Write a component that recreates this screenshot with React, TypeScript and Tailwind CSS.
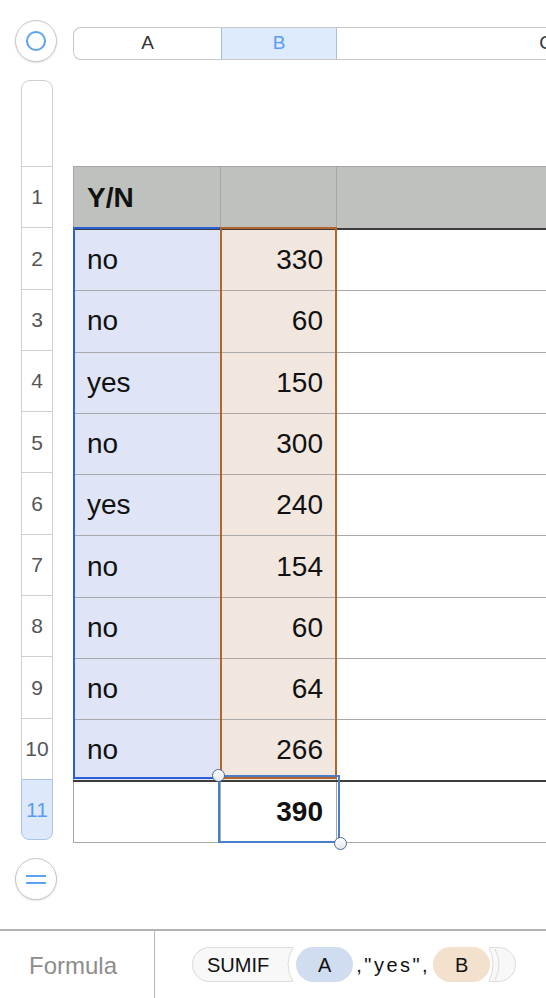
import React from "react";

const ROWS: { a: string; b: string }[] = [
  { a: "no", b: "330" },
  { a: "no", b: "60" },
  { a: "yes", b: "150" },
  { a: "no", b: "300" },
  { a: "yes", b: "240" },
  { a: "no", b: "154" },
  { a: "no", b: "60" },
  { a: "no", b: "64" },
  { a: "no", b: "266" },
];

const font = { fontFamily: '"Liberation Sans", Arial, sans-serif' };

function Handle({ className }: { className: string }) {
  return (
    <div
      className={`absolute h-[13px] w-[13px] rounded-full border-[1.5px] border-[#4f6a9c] bg-gradient-to-b from-white to-[#e4e7ee] ${className}`}
    />
  );
}

export default function App() {
  return (
    <div className="relative h-[998px] w-[546px] overflow-hidden bg-white text-[#111]" style={font}>
      {/* top bar: select-all circle + column headers */}
      <div className="flex h-[80px] items-start pt-[20px]">
        <div className="ml-[15px] flex h-[42px] w-[42px] items-center justify-center rounded-full border border-[#c6c6c6] bg-white shadow-[0_1px_2px_rgba(0,0,0,0.12)]">
          <div className="h-[20px] w-[20px] rounded-full border-2 border-[#5ca2f2]" />
        </div>
        <div className="ml-[16px] mt-[7px] flex h-[33px] flex-1 overflow-hidden rounded-l-[8px] border border-r-0 border-[#c9c9c9] bg-white text-[19px]">
          <div className="flex w-[147px] shrink-0 items-center justify-center text-[#333]">A</div>
          <div className="flex w-[116px] shrink-0 items-center justify-center border-x border-[#a8bfdc] bg-[#deebfc] text-[#5b9cf0]">
            B
          </div>
          <div className="flex w-[418px] shrink-0 items-center justify-center text-[#333]">C</div>
        </div>
      </div>

      {/* body */}
      <div className="flex">
        {/* row headers */}
        <div className="ml-[21px] flex w-[32px] shrink-0 flex-col text-[21px] text-[#555]">
          <div className="h-[86px] rounded-t-[9px] border border-b-0 border-[#cfcfcf]" />
          {Array.from({ length: 10 }).map((_, i) => (
            <div
              key={i}
              className="flex h-[61.3px] items-center justify-center border-x border-t border-[#cfcfcf]"
            >
              {i + 1}
            </div>
          ))}
          <div className="flex h-[61.3px] items-center justify-center rounded-b-[8px] border border-[#a9c4e6] bg-[#dde9fb] text-[#5b9cf0]">
            11
          </div>
          <div className="ml-[-6px] mt-[18px] flex h-[42px] w-[42px] items-center justify-center rounded-full border border-[#c6c6c6] bg-white shadow-[0_1px_2px_rgba(0,0,0,0.12)]">
            <div className="flex flex-col gap-[5px]">
              <div className="h-[2px] w-[20px] bg-[#5ca2f2]" />
              <div className="h-[2px] w-[20px] bg-[#5ca2f2]" />
            </div>
          </div>
        </div>

        {/* table */}
        <div className="ml-[20px] mt-[86px] flex-1">
          <div className="relative w-[560px] text-[28px]">
            {/* header row */}
            <div className="flex h-[62px] border-t border-[#a6a6a6] bg-[#bfc1bf]">
              <div className="flex w-[148px] items-center border-l border-r border-[#a6a6a6] pl-[13px] font-bold">
                Y/N
              </div>
              <div className="w-[116px] border-r border-[#a6a6a6]" />
              <div className="flex-1" />
            </div>
            <div className="h-[2px] bg-[#3c3c3c]" />
            {ROWS.map((r, i) => (
              <div
                key={i}
                className={`flex ${i === ROWS.length - 1 ? "h-[60px]" : "h-[61.3px] border-b border-[#a9a9a9]"}`}
              >
                <div className="flex w-[148px] items-center border-l border-r border-[#a9a9a9] bg-[#dfe5f7] pl-[13px]">
                  {r.a}
                </div>
                <div className="flex w-[116px] items-center justify-end border-r border-[#a9a9a9] bg-[#f2e7df] pr-[13px]">
                  {r.b}
                </div>
                <div className="flex-1" />
              </div>
            ))}
            <div className="h-[2px] bg-[#3c3c3c]" />
            <div className="flex h-[61px] border-b border-[#a9a9a9]">
              <div className="w-[148px] border-l border-r border-[#a9a9a9]" />
              <div className="flex w-[116px] items-center justify-end border-r border-[#a9a9a9] pr-[13px] font-bold">
                390
              </div>
              <div className="flex-1" />
            </div>

            {/* range highlights */}
            <div className="pointer-events-none absolute left-0 top-[61px] h-[552px] w-[149px] border-2 border-[#2b5fd6]" />
            <div className="pointer-events-none absolute left-[147px] top-[61px] h-[552px] w-[117px] border-2 border-[#b4652b]" />
            {/* selected cell */}
            <div className="pointer-events-none absolute left-[145px] top-[609px] h-[68px] w-[122px] border-2 border-[#4a7dca]" />
            <Handle className="left-[138.5px] top-[602.5px]" />
            <Handle className="left-[260.5px] top-[670.5px]" />
          </div>
        </div>
      </div>

      {/* formula bar */}
      <div className="absolute bottom-0 left-0 right-0 flex h-[69px] border-t-2 border-[#b3b3b3] bg-white">
        <div className="flex w-[155px] items-center border-r border-[#b5b5b5] pl-[29px] pt-[2px] text-[24px] text-[#8d8d8d]">
          Formula
        </div>
        <div className="flex items-center pl-[37px] text-[20px] text-[#111]">
          {/* SUMIF token with open paren */}
          <div className="flex h-[35px] items-center rounded-l-full border border-r-0 border-[#dcdcdc] bg-[#f8f8f8] pl-[14px] pr-[11px]">
            SUMIF
          </div>
          <svg width="14" height="35" viewBox="0 0 14 35" className="shrink-0">
            <path d="M0 0.5 H13 Q3 17.5 13 34.5 H0 Z" fill="#f8f8f8" />
            <path d="M0 0.5 H13 Q3 17.5 13 34.5 H0" fill="none" stroke="#dcdcdc" strokeWidth="1" />
          </svg>
          <div className="ml-[2px] flex h-[35px] w-[57px] items-center justify-center rounded-full bg-[#d0dcf0]">
            A
          </div>
          <div className="pl-[3px] pr-[3px] tracking-[2.5px]">,"yes",</div>
          <div className="flex h-[35px] w-[57px] items-center justify-center rounded-full bg-[#f3e1cd]">B</div>
          {/* close paren */}
          <svg width="27" height="35" viewBox="0 0 27 35" className="ml-[-1px] shrink-0">
            <path d="M0 0.5 H9.5 A17 17 0 0 1 9.5 34.5 H0 Q8 17.5 0 0.5 Z" fill="#f8f8f8" stroke="#dcdcdc" strokeWidth="1" />
            <path d="M6 2 Q14 17.5 6 33" fill="none" stroke="#dcdcdc" strokeWidth="1" />
          </svg>
        </div>
      </div>
    </div>
  );
}
